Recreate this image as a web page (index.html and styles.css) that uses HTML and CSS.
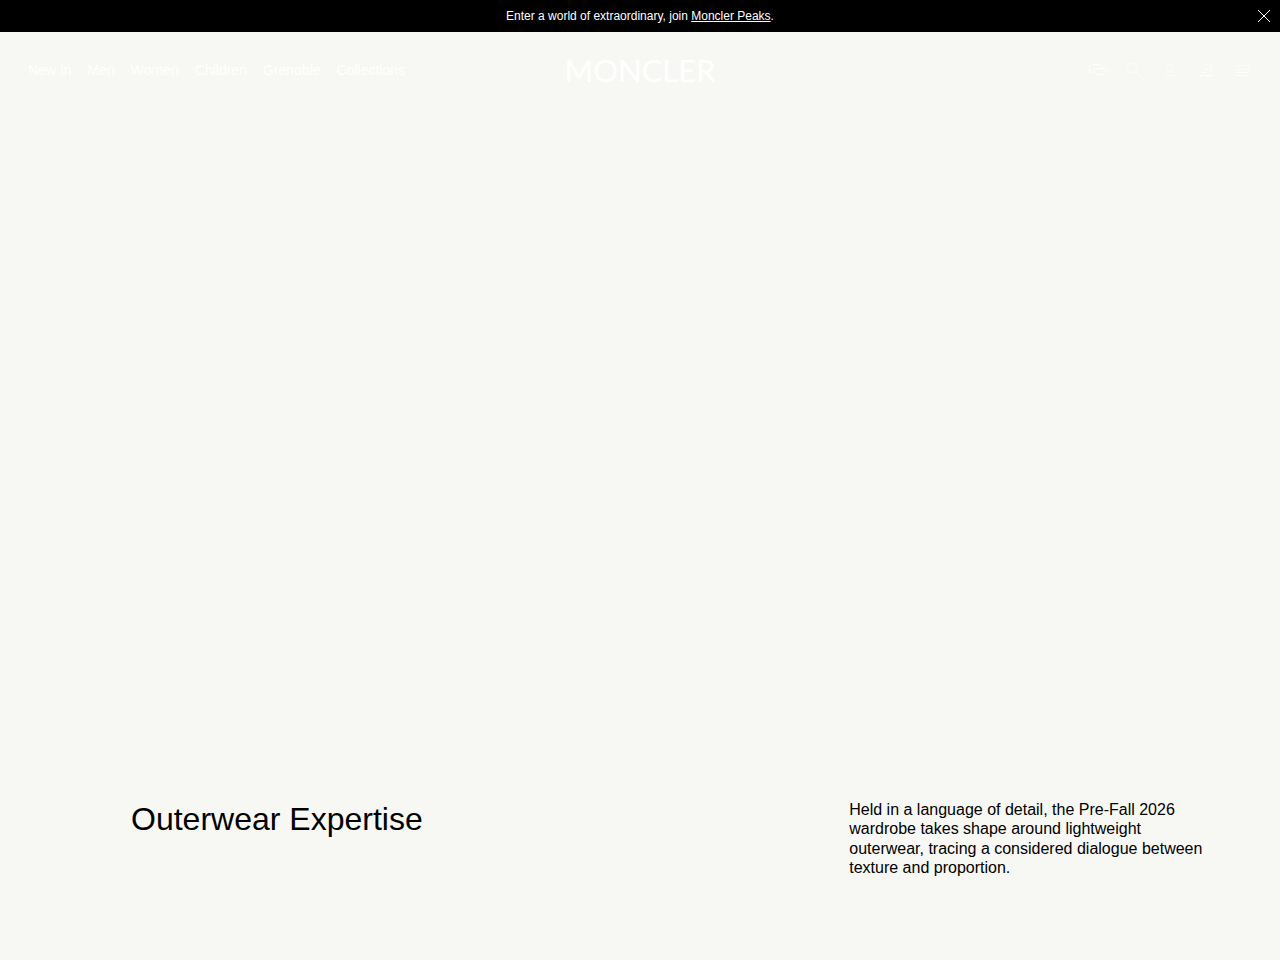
FILE: index.html
```html
<!DOCTYPE html>
<html lang="en">
<head>
    <meta charset="utf-8">
    <meta name="viewport" content="width=device-width, initial-scale=1">
    <title>Moncler</title>
    <link rel="stylesheet" href="styles.css">
</head>
<body>
    <div class="promo-bar">
        <p class="promo-text">Enter a world of extraordinary, join <a href="#peaks">Moncler Peaks</a>.</p>
        <button class="promo-close" type="button" aria-label="Close">
            <svg width="12" height="12" viewBox="0 0 12 12"><path d="M0 0L12 12M12 0L0 12"/></svg>
        </button>
    </div>

    <header class="header">
        <nav class="main-nav">
            <a href="#new-in">New In</a>
            <a href="#men">Men</a>
            <a href="#women">Women</a>
            <a href="#children">Children</a>
            <a href="#grenoble">Grenoble</a>
            <a href="#collections">Collections</a>
        </nav>
        <a class="logo" href="#home">MONCLER</a>
        <div class="tools">
            <button type="button" aria-label="Client service">
                <svg width="20" height="20" viewBox="0 0 20 20"><path d="M4 4.5H13M7 8.5H17M8 14.5H16"/><path class="faint" d="M1.5 5V12.5H6M13.5 5V8M6.5 9V14M18.5 8V13"/></svg>
            </button>
            <button type="button" aria-label="Search">
                <svg width="20" height="20" viewBox="0 0 20 20"><circle class="faint" cx="8" cy="8" r="5"/><path d="M12 12L16 16" stroke-dasharray="2 2"/></svg>
            </button>
            <button type="button" aria-label="Account">
                <svg class="faint" width="20" height="20" viewBox="0 0 20 20"><circle cx="10" cy="7" r="3"/><path d="M4 15.5C4 10 16 10 16 15.5Z"/></svg>
            </button>
            <button type="button" aria-label="Wishlist">
                <svg width="20" height="20" viewBox="0 0 20 20"><path d="M8 9.5H12M6 12.5H11M4 15.5H16"/><path class="faint" d="M14.5 2V9M16 6L13 12"/></svg>
            </button>
            <button type="button" aria-label="Shopping bag">
                <svg width="20" height="20" viewBox="0 0 20 20"><path d="M5 12.5H16M4 15.5H15M17.5 7V12"/><path class="faint" d="M4 5.5H17M6 9.5H13"/></svg>
            </button>
        </div>
    </header>

    <main class="hero">
        <h1>Outerwear Expertise</h1>
        <p>Held in a language of detail, the Pre-Fall 2026 wardrobe takes shape around lightweight outerwear, tracing a considered dialogue between texture and proportion.</p>
    </main>
</body>
</html>
```

FILE: styles.css
```css
* {
    box-sizing: border-box;
}
body {
    margin: 0;
    min-height: 100vh;
    display: flex;
    flex-direction: column;
    background: #f7f8f3;
    color: #000;
    font-family: "Liberation Sans", Arial, sans-serif;
}
a {
    color: inherit;
}
button {
    display: flex;
    padding: 0;
    border: none;
    background: none;
    color: inherit;
    cursor: pointer;
}
svg {
    fill: none;
    stroke: currentColor;
}

/* promo bar */
.promo-bar {
    display: grid;
    grid-template-columns: 1fr auto 1fr;
    align-items: center;
    height: 32px;
    padding: 0 10px;
    background: #000;
    color: #fff;
}
.promo-text {
    grid-column: 2;
    margin: 0;
    font-size: 12px;
    line-height: 16px;
}
.promo-close {
    justify-self: end;
}

/* header */
.header {
    display: grid;
    grid-template-columns: 1fr auto 1fr;
    align-items: center;
    height: 76px;
    padding: 0 28px;
    color: #fff;
}
.main-nav {
    display: flex;
    gap: 16px;
    font-size: 14px;
}
.main-nav a,
.logo {
    text-decoration: none;
}
.logo {
    font-family: Lato, sans-serif;
    font-size: 31px;
    line-height: 32px;
}
.tools {
    display: flex;
    justify-content: flex-end;
    gap: 16px;
}
.faint {
    opacity: 0.6;
}

/* hero caption */
.hero {
    flex: 1;
    display: flex;
    justify-content: space-between;
    align-items: flex-end;
    padding: 0 77px 83px 131px;
}
.hero h1 {
    margin: 0 0 38px;
    font-size: 32px;
    font-weight: 400;
    line-height: 40px;
}
.hero p {
    width: 33%;
    margin: 0;
    font-size: 16px;
    line-height: 1.2;
}
```
